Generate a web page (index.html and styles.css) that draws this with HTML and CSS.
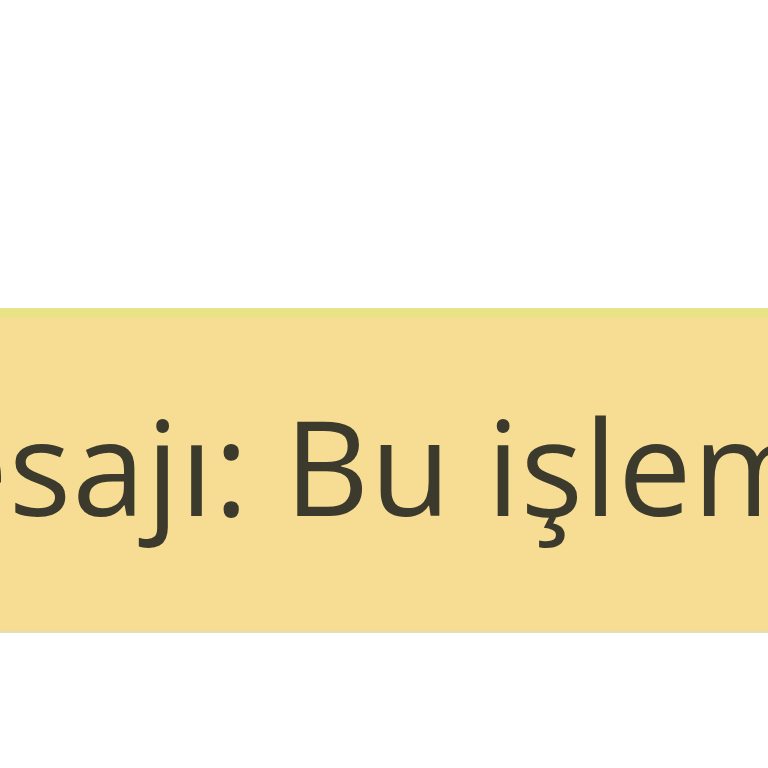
FILE: index.html
```html
<!DOCTYPE html>
<html lang="tr">
<head>
  <meta charset="utf-8">
  <title>Uyarı</title>
  <link rel="stylesheet" href="styles.css">
</head>
<body>
  <div class="page">
    <div class="notice">
      <p class="notice-text">Hata mesajı: Bu işlem tamamlanamadı.</p>
    </div>
  </div>
</body>
</html>
```

FILE: styles.css
```css
body {
  margin: 0;
  padding: 0;
  background-color: #fff;
  font-family: "Open Sans", "Noto Sans", sans-serif;
  overflow: hidden;
}
.page {
  width: 768px;
  height: 768px;
  overflow: hidden;
  padding-top: 308px;
  box-sizing: border-box;
}
.notice {
  height: 325px;
  background-color: #f6dd93;
  border-top: 10px solid #e9e287;
  border-bottom: 3px solid #e8deaa;
  padding-bottom: 18px;
  box-sizing: border-box;
  display: flex;
  align-items: center;
  overflow: hidden;
}
.notice-text {
  margin: 0 0 0 -516px; /* crop: reference starts mid-word */
  white-space: nowrap;
  font-size: 131px;
  color: #3b3a2c;
  letter-spacing: 1px;
}
```
